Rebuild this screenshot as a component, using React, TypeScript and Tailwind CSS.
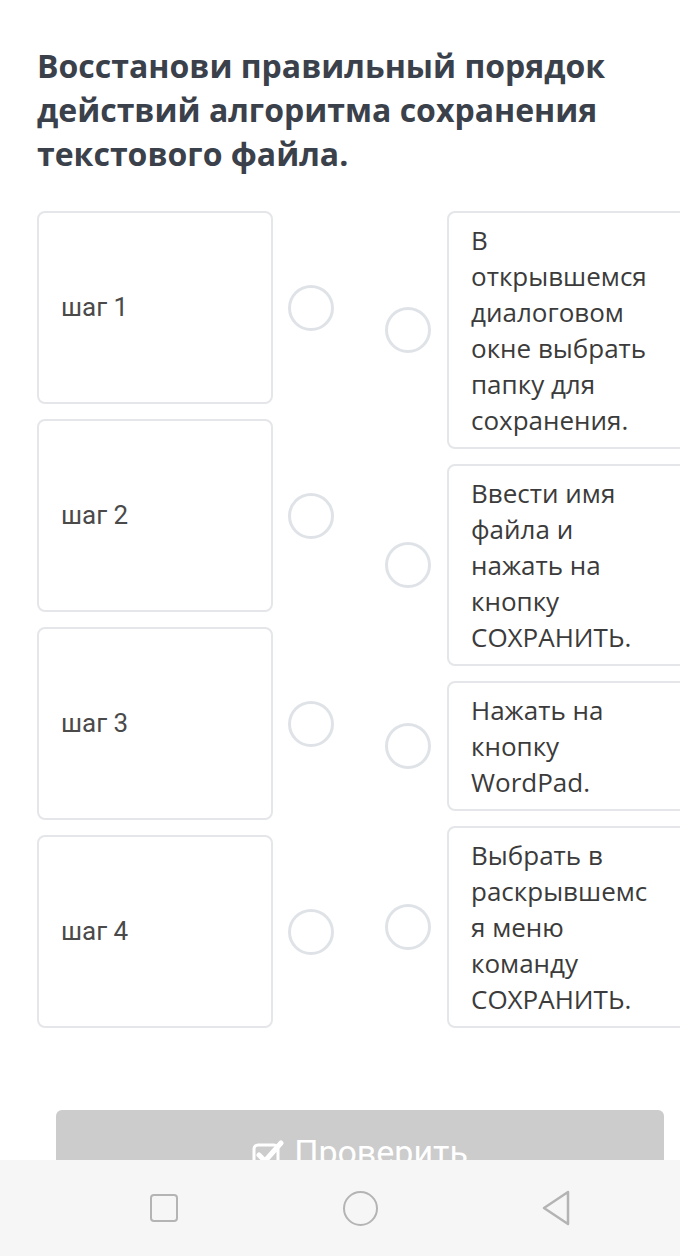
import React from "react";

const steps = ["шаг 1", "шаг 2", "шаг 3", "шаг 4"];

const actions = [
  "В открывшемся диалоговом окне выбрать папку для сохранения.",
  "Ввести имя файла и нажать на кнопку СОХРАНИТЬ.",
  "Нажать на кнопку WordPad.",
  "Выбрать в раскрывшемся меню команду СОХРАНИТЬ.",
];

const Dot = () => (
  <div className="w-[46px] h-[46px] shrink-0 rounded-full border-[3px] border-[#dfe3e7] bg-white" />
);

const App: React.FC = () => {
  return (
    <div className="relative w-[680px] h-[1256px] overflow-hidden bg-white">
      {/* Заголовок */}
      <h1
        className="pt-[44px] px-[37px] text-[32px] leading-[44px] font-bold text-[#3b414b]"
        style={{ fontFamily: '"Open Sans", sans-serif' }}
      >
        Восстанови правильный порядок действий алгоритма сохранения текстового файла.
      </h1>

      {/* Колонки */}
      <div className="mt-[35px] flex items-stretch pl-[37px]">
        <div className="grid grid-rows-4 gap-[15px]">
          {steps.map((s) => (
            <div key={s} className="flex items-center">
              <div className="w-[236px] h-full flex items-center pl-[22px] rounded-[8px] border-2 border-[#e4e6e9]">
                <span
                  className="text-[26px] text-[#4a4a4a]"
                  style={{ fontFamily: "Roboto, sans-serif" }}
                >
                  {s}
                </span>
              </div>
              <div className="ml-[15px]">
                <Dot />
              </div>
            </div>
          ))}
        </div>

        <div className="ml-[51px] flex flex-col gap-[15px]">
          {actions.map((a) => (
            <div key={a} className="flex items-center">
              <Dot />
              <div
                className="ml-[16px] w-[240px] shrink-0 rounded-[8px] border-2 border-[#e4e6e9] pl-[22px] pr-[34px] py-[9px] text-[26px] leading-[36px] text-[#3b3b3b] break-words"
                style={{ fontFamily: '"Open Sans", sans-serif' }}
              >
                {a}
              </div>
            </div>
          ))}
        </div>
      </div>

      {/* Кнопка */}
      <div className="mt-[82px] ml-[56px] w-[608px] h-[90px] rounded-[6px] bg-[#cccccc] flex items-start justify-center pt-[20px] gap-[10px]">
        <svg width="32" height="32" viewBox="0 0 32 32" className="mt-[9px]">
          <rect x="2" y="6" width="24" height="24" rx="4" fill="none" stroke="#fff" strokeWidth="3" />
          <path d="M7 16 L13 22 L29 4" fill="none" stroke="#fff" strokeWidth="5" strokeLinecap="round" strokeLinejoin="round" />
        </svg>
        <span
          className="text-[34px] leading-[44px] text-white"
          style={{ fontFamily: "Roboto, sans-serif" }}
        >
          Проверить
        </span>
      </div>

      {/* Навигация Android */}
      <div className="absolute left-0 bottom-0 w-full h-[96px] bg-[#f6f6f6] flex items-center justify-center gap-[136px] pl-[40px]">
        <div className="w-[60px] flex justify-center">
          <div className="w-[28px] h-[28px] rounded-[4px] border-[2.5px] border-[#b4b4b4]" />
        </div>
        <div className="w-[60px] flex justify-center">
          <div className="w-[35px] h-[35px] rounded-full border-[2.5px] border-[#b4b4b4]" />
        </div>
        <div className="w-[60px] flex justify-center">
          <svg width="32" height="38" viewBox="0 0 32 38">
            <path d="M28 3 L4 19 L28 35 Z" fill="none" stroke="#b4b4b4" strokeWidth="2.5" strokeLinejoin="round" />
          </svg>
        </div>
      </div>
    </div>
  );
};

export default App;
